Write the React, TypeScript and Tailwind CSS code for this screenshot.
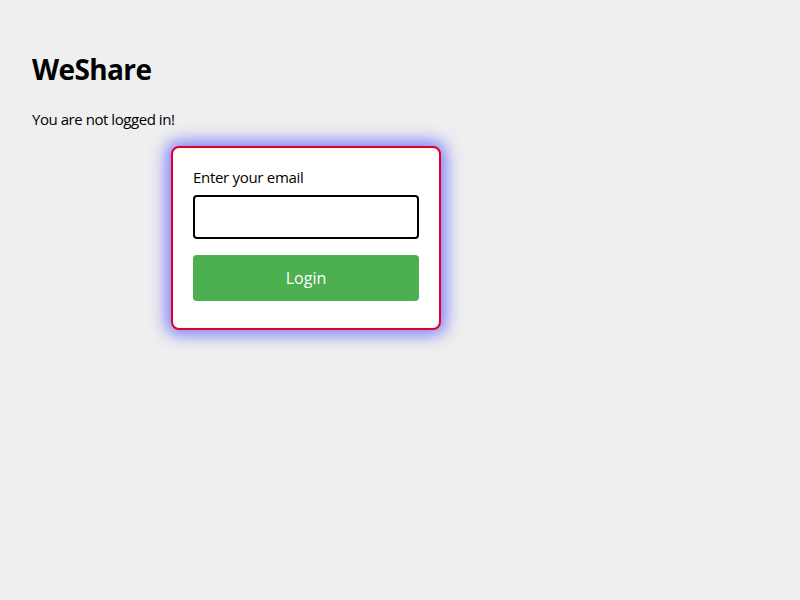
import React, { useState } from 'react';

export default function App() {
  const [email, setEmail] = useState('');

  return (
    <div className="min-h-[600px] w-full bg-[#efefef] px-8 pt-[49px] font-['Open_Sans',sans-serif] text-black">
      <h1 className="text-[28px] font-bold leading-[40px] tracking-[-0.6px]">WeShare</h1>
      <p className="mt-[19px] text-[15px] leading-[22px] tracking-[-0.45px]">You are not logged in!</p>

      <form
        onSubmit={(e) => e.preventDefault()}
        className="ml-[139px] mt-[16px] flex w-[270px] flex-col rounded-lg border-2 border-[#e0002a] bg-white px-5 pb-[27px] pt-[18px] shadow-[0_0_16px_5px_rgba(80,80,255,0.7)]"
      >
        <label className="text-[15px] leading-[22px] tracking-[-0.3px]">Enter your email</label>
        <input
          type="email"
          value={email}
          onChange={(e) => setEmail(e.target.value)}
          className="mt-[7px] h-[44px] w-full rounded-[4px] border-2 border-black bg-white px-2 text-[15px] outline-none"
        />
        <button
          type="submit"
          className="mt-[16px] h-[46px] w-full rounded-[4px] bg-[#4caf50] text-[16px] text-white"
        >
          Login
        </button>
      </form>
    </div>
  );
}
